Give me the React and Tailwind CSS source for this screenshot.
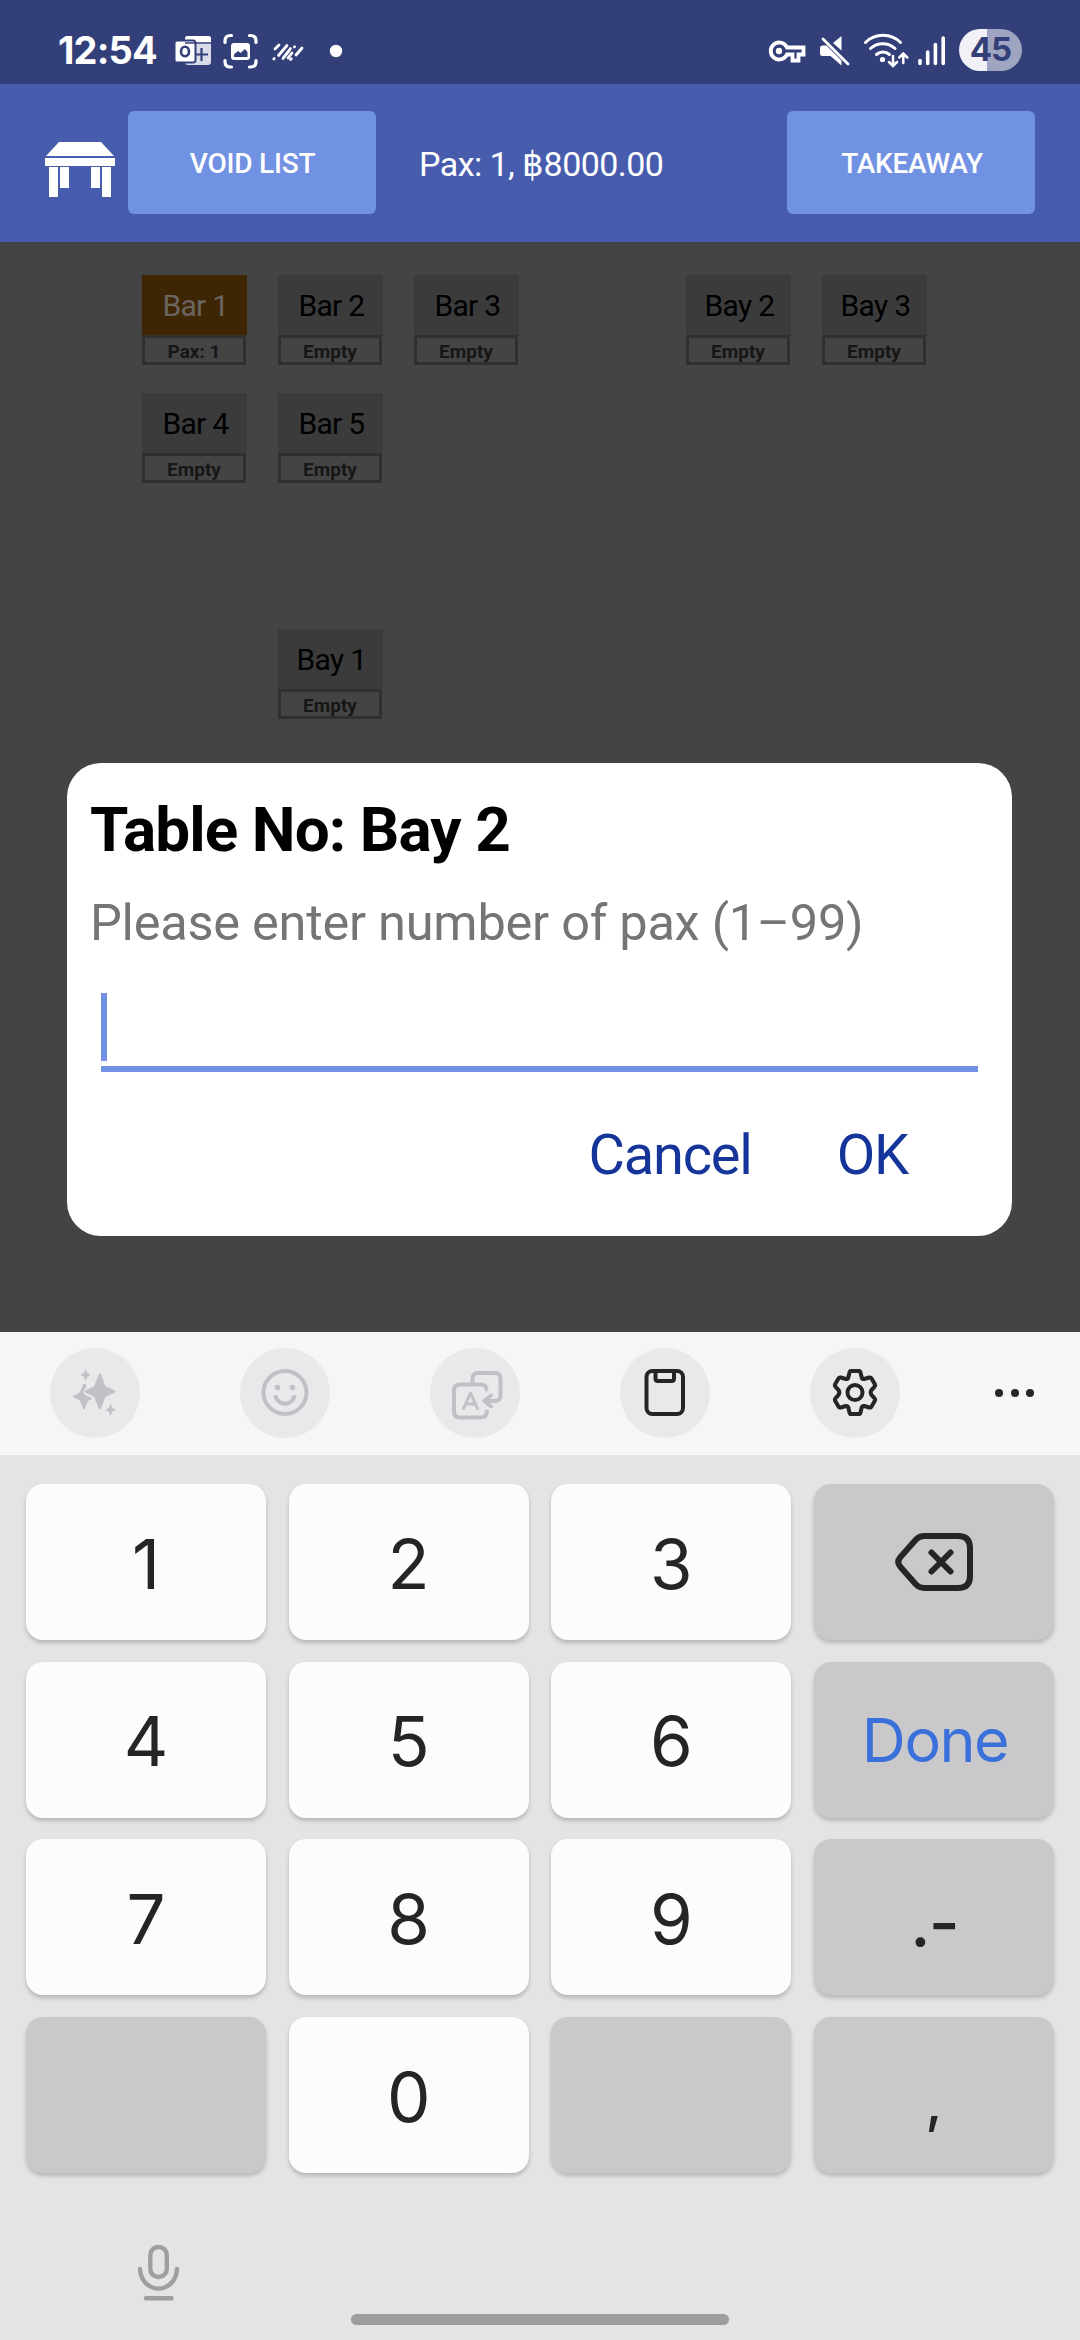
import React from "react";

const tables = [
  { name: "Bar 1", status: "Pax: 1", busy: true, pos: "col-start-1 row-start-1" },
  { name: "Bar 2", status: "Empty", pos: "col-start-2 row-start-1" },
  { name: "Bar 3", status: "Empty", pos: "col-start-3 row-start-1" },
  { name: "Bay 2", status: "Empty", pos: "col-start-5 row-start-1" },
  { name: "Bay 3", status: "Empty", pos: "col-start-6 row-start-1" },
  { name: "Bar 4", status: "Empty", pos: "col-start-1 row-start-2" },
  { name: "Bar 5", status: "Empty", pos: "col-start-2 row-start-2" },
  { name: "Bay 1", status: "Empty", pos: "col-start-2 row-start-4" },
];

function StatusIconsLeft() {
  return (
    <svg className="ml-[18px] h-[84px] w-[170px]" viewBox="175 0 170 84" fill="none" stroke="#fff">
      {/* calendar mail */}
      <g stroke="none">
        <rect x="185" y="36" width="26" height="29" rx="3" fill="#d9dbe8" />
        <path d="M185 43V39q0-3 3-3h20q3 0 3 3v4z" fill="#fff" />
        <rect x="174.500" y="40.500" width="21" height="22" rx="2.500" fill="#fff" stroke="#333f78" strokeWidth="2" />
        <path d="M196 54.500h12M201.500 48v13" stroke="#333f78" strokeWidth="2.200" />
        <path d="M185 43h26" stroke="#333f78" strokeWidth="1.500" />
        <ellipse cx="185" cy="51.500" rx="4" ry="4.700" stroke="#333f78" strokeWidth="2.600" />
      </g>
      {/* screenshot */}
      <g strokeWidth="3.200" strokeLinecap="round">
        <path d="M225 42.500v-1.500q0-5.500 5.500-5.500h1M249.500 35.500h1q5.500 0 5.500 5.500v1.500M225 60.500v1.500q0 5 5.500 5h1M249.500 67h1q5.500 0 5.500-5v-1.500" />
      </g>
      <rect x="231" y="43" width="19" height="17" rx="3" fill="#fff" stroke="none" />
      <path d="M234 57v-2.500l4-3.500 2.500 2 4.500-4 2.500 3v5z" fill="#333f78" stroke="none" />
      {/* slanted strokes */}
      <g strokeWidth="2.800" strokeLinecap="round">
        <path d="M275 49l4-4M278.500 55.500l8.500-10M283 58.500l6-7.500M294.300 47l.3-.3M290.500 59.500l.8-.8M292 53l-4 5M296 55l6-7M273.800 59l.4-.4M283.500 57.500l7-9" />
      </g>
      <circle cx="336" cy="51" r="6.200" fill="#fff" stroke="none" />
    </svg>
  );
}

function StatusIconsRight() {
  return (
    <svg className="h-[84px] w-[185px]" viewBox="765 0 185 84" fill="none" stroke="#fff">
      {/* key */}
      <path d="M787 47.500a8.500 8.500 0 1 0 0 7h5.500v6h6v-6h5v-7z" strokeWidth="3.800" />
      <circle cx="779" cy="51" r="3.200" fill="#fff" stroke="none" />
      {/* muted speaker */}
      <path d="M820 48q0-2.500 2.500-2.500h4l15 15v5l-11-9.500h-8q-2.500 0-2.500-2.500zM833 43l8.500-7v14.500z" fill="#fff" stroke="none" />
      <path d="M823 39l25 25" strokeWidth="2.800" strokeLinecap="round" />
      {/* wifi */}
      <g strokeWidth="3" strokeLinecap="round">
        <path d="M865.500 42.500a25 25 0 0 1 35 0M870.500 48.500a18 18 0 0 1 24.500 0M876.500 54.500a10 10 0 0 1 13 0" />
      </g>
      <circle cx="882.500" cy="59.500" r="2.600" fill="#fff" stroke="none" />
      <path d="M893 56v9.500M889 62l4 4 4-4M903.300 63v-9.500M899.300 57.500l4-4 4 4" strokeWidth="2.500" strokeLinecap="round" />
      {/* signal */}
      <path d="M920 60.500v3M927.700 52v11.500M935.400 44.500v19M943.200 38v25.500" strokeWidth="3.600" strokeLinecap="round" />
    </svg>
  );
}

function TableLogo() {
  return (
    <svg className="h-[58px] w-[70px]" viewBox="45 141 70 58" fill="#fff">
      <path d="M59 142h42l13 14H46z" />
      <path d="M45 158h70v8H45zM49 167h9v30h-9zM60 167h9v21h-9zM91 167h9v21h-9zM102 167h9v30h-9z" />
    </svg>
  );
}

function Table({ name, status, busy, pos }) {
  return (
    <div className={pos}>
      <div
        className={
          busy
            ? "flex h-[60px] w-[105px] items-center justify-center bg-[#3e2605] pl-[2px] text-[30px] tracking-[-0.7px] text-[#6b6560]"
            : "flex h-[60px] w-[105px] items-center justify-center bg-[#3b3b3b] pl-[2px] text-[30px] tracking-[-0.7px] text-black"
        }
      >
        {name}
      </div>
      <div className="flex h-[30px] w-[104px] items-center justify-center border-[3px] border-[#303030] pt-[3px] text-[19px] leading-none font-bold text-[#161616]">
        {status}
      </div>
    </div>
  );
}

const iconFrame = "flex h-[90px] w-[90px] items-center justify-center rounded-full bg-[#e9e9eb]";

function Toolbar() {
  return (
    <div className="flex h-[123px] items-center bg-[#f6f6f8] pr-[46px] pb-px pl-[50px]">
      <div className="flex w-[850px] justify-between">
        <div className={iconFrame}>
          <svg className="h-[60px] w-[60px]" viewBox="65 1363 60 60" fill="#c1c1c5">
            <path d="M99.800 1373.500q1 0 1.600 2l3.500 9.500q.5 1.500 2 2l7 3q1.500.6 1.500 1.500t-1.500 1.500l-7 3q-1.500.6-2 2l-3.500 9.500q-.6 2-1.600 2t-1.600-2l-3.500-9.500q-.5-1.500-2-2l-6.500-3q-1.500-.6-1.500-1.500t1.500-1.500l6.500-3q1.500-.6 2-2l3.500-9.500q.6-2 1.600-2z" />
            <path d="M84.500 1383.500q2 0 2 3l-3 4.500q-1 2 2 4l7 3.500-4 2-2 3-1 3.500q-.5 2.500-1.500 2.500t-1.500-2.500l-2-5q-.5-1.500-2-2.200l-4-2q-1.300-.6-1.300-1.300t1.300-1.300l4-2q1.500-.7 2-2.200l2-5q.5-2.500 2-2.500z" />
            <path d="M85.700 1369l1.700 4.300 3.300 1.700-3.300 1.700-1.700 4.300-1.700-4.300-3.300-1.700 3.300-1.700zM110.500 1403.500l1.800 4.500 3.500 1.700-3.500 1.700-1.800 4.500-1.800-4.500-3.500-1.700 3.500-1.700z" />
          </svg>
        </div>
        <div className={iconFrame}>
          <svg className="h-[60px] w-[60px]" viewBox="-30 -29.500 60 60" fill="none" stroke="#c1c1c5" strokeWidth="4" strokeLinecap="round">
            <circle r="21.500" />
            <path d="M-9.200 4.500a9.700 9.700 0 0 0 18.400 0" />
            <circle cx="-7.500" cy="-5" r="2.700" fill="#c1c1c5" stroke="none" />
            <circle cx="7.500" cy="-5" r="2.700" fill="#c1c1c5" stroke="none" />
          </svg>
        </div>
        <div className={iconFrame}>
          <svg className="h-[60px] w-[60px]" viewBox="445 1363 60 60" fill="none" stroke="#c1c1c5" strokeWidth="4" strokeLinecap="round" strokeLinejoin="round">
            <path d="M472.500 1383v-4q0-6 6-6h16q6 0 6 6v16q0 6-6 6h-8" />
            <path d="M486.500 1389.500q0-5-6-5h-20.500q-6 0-6 6v21q0 6 6 6h20.500q6 0 6.500-6" />
            <path d="M491 1395.500l-6.500 5.500 6.500 5.500" />
            <path d="M463.500 1408.500l7-15.500 7 15.500M466.500 1404h8" strokeWidth="3" />
          </svg>
        </div>
        <div className={iconFrame}>
          <svg className="h-[60px] w-[60px]" viewBox="635 1363 60 60" fill="none" stroke="#252528" strokeWidth="4">
            <rect x="646.500" y="1371" width="36.500" height="43" rx="6" />
            <path d="M655.500 1371v7.500q0 2.500 2.500 2.500h13.500q2.500 0 2.500-2.500v-7.500" />
          </svg>
        </div>
        <div className={iconFrame}>
          <svg className="h-[60px] w-[60px]" viewBox="-30 -29.500 60 60" fill="none" stroke="#252528" strokeWidth="4" strokeLinejoin="round">
            <circle r="7.500" />
            <path d="M-4-21.500h8q1.200 0 1.500 1.500l1.200 5q.6 1.800 2.500 1.500l5-1.500q1.500-.4 2.200.8l3.600 6.200q.6 1.200-.4 2.200l-3.200 3.500q-1.500 2.300 0 4.600l3.200 3.500q1 1 .4 2.200l-3.600 6.200q-.7 1.200-2.200.8l-5-1.500q-1.900-.3-2.500 1.500l-1.200 5q-.3 1.500-1.500 1.500h-8q-1.200 0-1.500-1.500l-1.200-5q-.6-1.800-2.500-1.500l-5 1.500q-1.500.4-2.200-.8l-3.600-6.200q-.6-1.200.4-2.200l3.200-3.500q1.500-2.300 0-4.600l-3.200-3.500q-1-1-.4-2.200l3.600-6.200q.7-1.200 2.200-.8l5 1.500q1.900.3 2.500-1.500l1.200-5q.3-1.500 1.500-1.500z" />
          </svg>
        </div>
      </div>
      <div className="ml-auto flex gap-[7.500px]">
        <span className="h-2 w-2 rounded-full bg-[#252528]" />
        <span className="h-2 w-2 rounded-full bg-[#252528]" />
        <span className="h-2 w-2 rounded-full bg-[#252528]" />
      </div>
    </div>
  );
}

const keyBase = "flex items-center justify-center rounded-[17px] shadow-[0_3px_4px_rgba(0,0,0,0.2)]";

function Digit({ children }) {
  return <div className={keyBase + " bg-[#fcfcfe] pt-[5px] text-[69px] text-[#252528]"}>{children}</div>;
}

function Fn({ children }) {
  return <div className={keyBase + " bg-[#c9c9cb] text-[#252528]"}>{children}</div>;
}

function Keyboard() {
  return (
    <div className="flex h-[1008px] flex-col bg-[#e4e4e6] font-['Inter',sans-serif]">
      <Toolbar />
      <div className="mx-[26px] mt-[29px] grid h-[689px] grid-cols-[repeat(4,240px)] grid-rows-[repeat(4,156px)] content-between justify-between">
        <Digit>1</Digit>
        <Digit>2</Digit>
        <Digit>3</Digit>
        <Fn>
          <svg className="h-[62px] w-[80px]" viewBox="-40 -31 80 62" fill="none" stroke="#252528" strokeWidth="6" strokeLinecap="round" strokeLinejoin="round">
            <path d="M-10-26h34q12 0 12 12v28q0 12-12 12h-34q-4.500 0-8-3.500l-15.500-17.500q-4.500-5 0-10l15.500-17.500q3.500-3.500 8-3.500z" />
            <path d="M-2.500-9.500l19 19M16.500-9.500l-19 19" />
          </svg>
        </Fn>
        <Digit>4</Digit>
        <Digit>5</Digit>
        <Digit>6</Digit>
        <Fn>
          <span className="pt-[3px] pl-[2px] text-[61px] tracking-[-1.500px] text-[#3a70d9]">Done</span>
        </Fn>
        <Digit>7</Digit>
        <Digit>8</Digit>
        <Digit>9</Digit>
        <Fn>
          <span className="pt-[12px] text-[67px] font-medium tracking-[-2px]">.-</span>
        </Fn>
        <Fn />
        <Digit>0</Digit>
        <Fn />
        <Fn>
          <span className="pt-[14px] text-[56px] font-medium">,</span>
        </Fn>
      </div>
      <div className="mt-[65px] ml-[132px] h-[70px] w-[54px]">
        <svg className="h-[70px] w-[54px]" viewBox="132 2238 54 70" fill="none" stroke="#9f9fa1" strokeWidth="4.400" strokeLinecap="round">
          <rect x="150.300" y="2247" width="16.500" height="30" rx="8" />
          <path d="M140 2269q.5 9 6 14.300t12.500 5.300 12.500-5.300 6-14.300M146 2298.300h25.500" />
        </svg>
      </div>
      <div className="mx-auto mt-[6px] h-[11px] w-[378px] rounded-full bg-[#9d9d9f]" />
    </div>
  );
}

export default function App() {
  return (
    <div className="flex h-[2340px] w-[1080px] flex-col overflow-hidden bg-[#444444] font-['Roboto',sans-serif]">
      <div className="flex h-[84px] items-center bg-[#333f78] pr-[58px] pl-[58px] text-white">
        <span className="w-[99px] pt-[16px] font-['Inter',sans-serif] text-[38px] leading-[44px] font-bold tracking-[-0.8px] whitespace-nowrap">12:54</span>
        <StatusIconsLeft />
        <div className="ml-auto flex items-center gap-[9px]">
          <StatusIconsRight />
          <div className="mt-4 flex h-[42px] w-[63px] items-center justify-center rounded-full bg-[linear-gradient(90deg,#f1f1f7_45%,#9fa4c1_45%)] font-['Inter',sans-serif] text-[33px] font-bold tracking-[-1px] text-[#333f78]">
            45
          </div>
        </div>
      </div>

      <div className="flex h-[158px] items-start bg-[#485cae] pr-[45px] pl-[45px] text-white">
        <div className="mt-[57px]">
          <TableLogo />
        </div>
        <div className="mt-[27px] ml-[13px] flex h-[103px] w-[248px] items-center justify-center rounded-[6px] bg-[#7191e2] pt-[2px] pl-px text-[28px] font-medium tracking-[-0.2px]">
          VOID LIST
        </div>
        <div className="mt-[60px] ml-[43px] text-[34px] leading-[40px] tracking-[-0.55px] whitespace-nowrap">Pax: 1, ฿8000.00</div>
        <div className="mt-[27px] ml-auto flex h-[103px] w-[248px] items-center justify-center rounded-[6px] bg-[#7191e2] pt-[2px] pl-[2px] text-[28px] font-medium tracking-[-0.3px]">
          TAKEAWAY
        </div>
      </div>

      <div className="h-[521px] pt-[33px] pl-[142px]">
        <div className="grid grid-cols-[repeat(6,136px)] grid-rows-[repeat(4,118px)]">
          {tables.map((t) => (
            <Table key={t.name} {...t} />
          ))}
        </div>
      </div>

      <div className="ml-[67px] flex h-[473px] w-[945px] flex-col rounded-[34px] bg-white">
        <h1 className="mt-[30px] ml-[23px] text-[62px] leading-[74px] font-bold tracking-[-0.9px] text-black">Table No: Bay 2</h1>
        <p className="mt-[26px] ml-[23px] text-[50.5px] leading-[60px] tracking-[-0.25px] text-[#757575]">Please enter number of pax (1–99)</p>
        <div className="mt-[40px] ml-[34px] h-[79px] w-[877px] border-b-[6px] border-[#7191e2]">
          <div className="h-[68px] w-[6px] bg-[#7191e2]" />
        </div>
        <div className="mt-[50px] flex justify-end gap-[85px] pr-[104px] text-[56px] leading-[66px] tracking-[-1.2px] text-[#16359b]">
          <span>Cancel</span>
          <span>OK</span>
        </div>
      </div>

      <div className="mt-auto">
        <Keyboard />
      </div>
    </div>
  );
}
